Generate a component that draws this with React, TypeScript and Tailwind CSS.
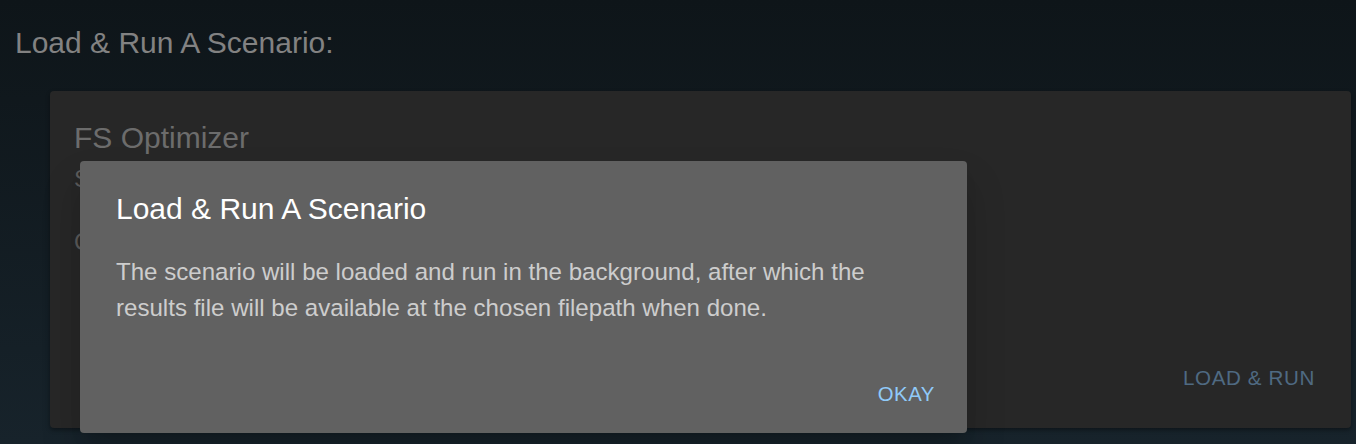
import React from "react";

const font = { fontFamily: '"Liberation Sans", Arial, Helvetica, sans-serif' };

function ScenarioCard() {
  return (
    <div className="ml-[50px] mr-[5px] mt-[30px] flex h-[337px] flex-col rounded-[4px] bg-[#272727] pb-[36px] pl-6 pr-[36px] pt-[29px] shadow-[0_2px_4px_rgba(0,0,0,0.4)]">
      <p className="text-[30px] leading-[36px] text-[#6c6c6c]">FS Optimizer</p>
      <p className="mt-[5px] text-[24px] leading-[36px] text-[#5c5c5c]">Select a scenario file to load</p>
      <p className="mt-[27px] text-[24px] leading-[36px] text-[#5c5c5c]">Choose the output filepath</p>
      <div className="mt-auto flex justify-end">
        <button className="px-0 text-[20.6px] uppercase leading-[28px] tracking-[0.03em] text-[#4f6a82]">
          Load &amp; Run
        </button>
      </div>
    </div>
  );
}

function InfoDialog() {
  return (
    <div className="absolute left-[80px] top-[161px] flex h-[272px] w-[887px] flex-col rounded-[4px] bg-[#616161] px-[36px] pb-[25px] pt-[30px] shadow-[0_11px_15px_-7px_rgba(0,0,0,0.2),0_24px_38px_3px_rgba(0,0,0,0.14)]">
      <h2 className="text-[30px] leading-[36px] text-white">Load &amp; Run A Scenario</h2>
      <p className="mt-[27px] text-[24.1px] leading-[36px] text-[#cdcdcd]">
        The scenario will be loaded and run in the background, after which the
        <br />
        results file will be available at the chosen filepath when done.
      </p>
      <div className="mt-auto flex justify-end">
        <button className="-mr-[4px] text-[20.3px] uppercase leading-[28px] tracking-[0.03em] text-[#90caf9]">
          Okay
        </button>
      </div>
    </div>
  );
}

export default function App() {
  return (
    <div
      style={font}
      className="relative h-[444px] w-full overflow-hidden bg-gradient-to-b from-[#0e1519] to-[#17232b]"
    >
      <div className="px-[15px] pt-[25px]">
        <h1 className="text-[30px] leading-[36px] text-[#828282]">Load &amp; Run A Scenario:</h1>
      </div>
      <ScenarioCard />
      <InfoDialog />
    </div>
  );
}
